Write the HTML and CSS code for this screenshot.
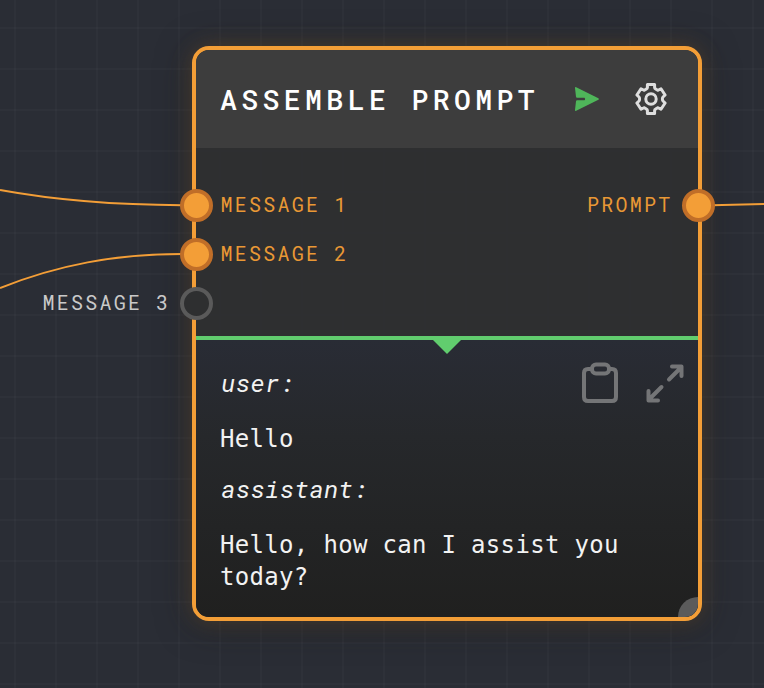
FILE: index.html
```
<!DOCTYPE html>
<html lang="en">
<head>
<meta charset="utf-8">
<title>Assemble Prompt</title>
<link rel="stylesheet" href="styles.css">
</head>
<body>
<main class="canvas">
  <svg class="wires" width="764" height="688" viewBox="0 0 764 688">
    <path d="M0 190C60 201 120 205 182 205.200"/>
    <path d="M0 288C58 265 115 254 182 254"/>
    <path d="M712 205.200L764 204"/>
  </svg>
  <article class="node">
    <header class="node-header">
      <h1 class="title">ASSEMBLE PROMPT</h1>
      <svg class="run" width="24" height="24" viewBox="0 0 24 24"><path d="M1.200.2Q-.2-.2 0 1L1 9.700Q1.200 10.600 2 10.700H9.500Q10.700 12 9.500 13.300H2Q1.200 13.400 1 14.300L0 23Q-.2 24.200 1.200 23.800L23.400 12.800Q24.400 12 23.400 11.200Z"/></svg>
      <svg class="gear" width="32" height="32" viewBox="0 0 32 32"><path d="M12.400 1.600H19.600V4.500Q19.700 5.400 20.600 5.900Q22 6.800 23 7.300L26 5.700L30.100 12L28 14Q27.400 14.600 27.400 16Q27.400 17.400 28 18L30.100 20L26 26.300L23 24.700Q22 25.200 20.600 26.100Q19.700 26.600 19.600 27.500V30.400H12.400V27.500Q12.300 26.600 11.400 26.100Q10 25.200 9 24.700L6 26.300L1.900 20L4 18Q4.600 17.400 4.600 16Q4.600 14.600 4 14L1.900 12L6 5.700L9 7.300Q10 6.800 11.400 5.900Q12.300 5.400 12.400 4.500Z"/><circle cx="16" cy="16" r="5.200"/></svg>
    </header>
    <section class="ports">
      <div class="port-row">
        <div class="port"><i class="dot"></i><span>MESSAGE 1</span></div>
        <div class="port out"><span>PROMPT</span><i class="dot"></i></div>
      </div>
      <div class="port-row"><div class="port"><i class="dot"></i><span>MESSAGE 2</span></div></div>
      <div class="port-row"><div class="port free"><span>MESSAGE 3</span><i class="dot"></i></div></div>
    </section>
    <section class="output">
      <div class="messages">
        <p class="role">user:</p>
        <p class="text">Hello</p>
        <p class="role">assistant:</p>
        <p class="text">Hello, how can I assist you today?</p>
      </div>
      <svg class="tools" width="104" height="44" viewBox="0 0 104 44">
        <path d="M11 7H8Q4 7 4 11V35Q4 39 8 39H32Q36 39 36 35V11Q36 7 32 7H29"/>
        <rect x="12" y="2.500" width="17" height="9" rx="4"/>
        <path d="M89 17.500L101 5.500M92 4.500H101.500V14M81.500 25L69 37.500M68.500 29V38.500H78"/>
      </svg>
      <i class="resize"></i>
    </section>
  </article>
</main>
</body>
</html>
```
FILE: styles.css
```
* { box-sizing: border-box; }
body { margin: 0; }
.canvas {
  position: relative;
  width: 764px;
  height: 688px;
  padding: 46px 62px 0 192px;
  overflow: hidden;
  background-color: #2a2d35;
  background-image:
    linear-gradient(90deg, rgba(255,255,255,.02) 2px, transparent 2px),
    linear-gradient(rgba(255,255,255,.02) 2px, transparent 2px);
  background-size: 41px 41px;
  background-position: 14px 27px;
}
.wires { position: absolute; left: 0; top: 0; z-index: 2; fill: none; stroke: #f39e37; stroke-width: 2; }
.node {
  position: relative;
  width: 510px;
  height: 575px;
  border: 4px solid #f39e37;
  border-radius: 17px;
  background: rgba(46,47,48,.95);
  box-shadow: 0 0 22px rgba(243,158,55,.18), 0 4px 34px rgba(28,26,22,.5);
  font-family: "Roboto Mono", "DejaVu Sans Mono", monospace;
}
.node-header {
  display: flex;
  align-items: center;
  height: 98px;
  padding: 0 31px 0 24px;
  border-radius: 13px 13px 0 0;
  background: #3d3d3d;
}
.title {
  flex: 1;
  margin: 1px 0 0;
  color: #fff;
  font-size: 28px;
  font-weight: 500;
  letter-spacing: 4.47px;
  line-height: 36px;
  white-space: nowrap;
}
.run { flex: none; margin-right: 36px; fill: #4fb65a; }
.gear { flex: none; fill: none; stroke: #dedede; stroke-width: 3; stroke-linejoin: round; }
.ports { height: 188px; padding-top: 32px; }
.port-row { display: flex; justify-content: space-between; height: 49px; }
.port {
  display: flex;
  align-items: center;
  gap: 8px;
  height: 50px;
  margin-left: -16.500px;
  color: #e99835;
  font-size: 20px;
  letter-spacing: 2.23px;
  line-height: 24px;
  white-space: nowrap;
}
.port span { position: relative; top: -1px; }
.port.out { margin: 0 -16.500px 0 0; gap: 9px; }
.port.free { margin-left: -153.500px; gap: 9px; color: #c9c9c9; }
.dot {
  position: relative;
  z-index: 3;
  flex: none;
  width: 33px;
  height: 33px;
  border: 4px solid #c06e28;
  border-radius: 50%;
  background: #f39e37;
}
.free .dot { border-color: #5a5a5a; background: #2e2f30; }
.output {
  position: relative;
  display: flex;
  height: 281px;
  border-top: 4px solid #61cd6e;
  border-radius: 0 0 13px 13px;
  overflow: hidden;
  background: linear-gradient(#292c35, #26282b 35%, #20201f);
  color: #f2f2f2;
}
.output::before {
  content: "";
  position: absolute;
  left: 236px;
  top: -1px;
  border: 15px solid transparent;
  border-top-color: #61cd6e;
  border-bottom: 0;
}
.messages { width: 430px; padding: 27px 0 0 24px; font-size: 24px; letter-spacing: .32px; line-height: 32px; }
.messages p { margin: 0 0 24px; }
.messages .text { margin-bottom: 18px; font-family: "DejaVu Sans Mono", monospace; }
.messages .role { padding-left: 1px; font-size: 24.500px; font-style: italic; }
.tools { position: absolute; right: 14px; top: 22px; fill: none; stroke: #747577; stroke-width: 4; stroke-linecap: round; stroke-linejoin: round; }
.resize { position: absolute; right: -20px; bottom: -20px; width: 40px; height: 40px; border-radius: 50%; background: #5b5b5b; }
```
